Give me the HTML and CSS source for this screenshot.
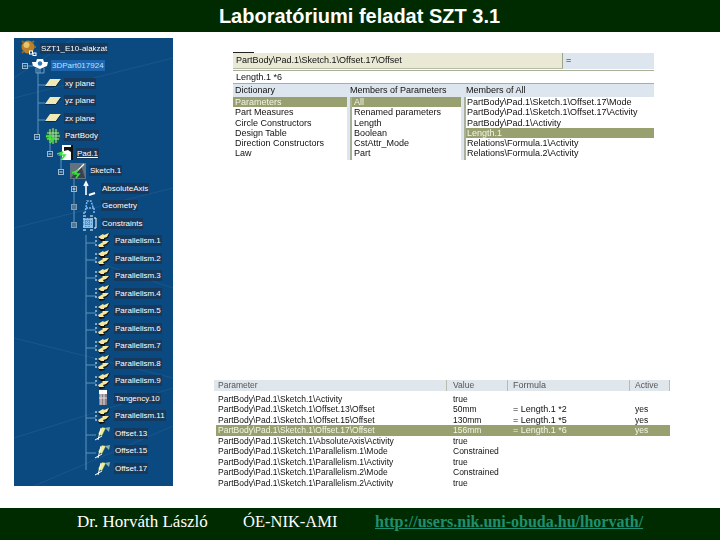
FILE: index.html
```html
<!DOCTYPE html>
<html lang="hu">
<head>
<meta charset="utf-8">
<title>Laboratóriumi feladat SZT 3.1</title>
<link rel="stylesheet" href="styles.css">
</head>
<body>
<svg class="defs" width="0" height="0">
  <symbol id="i-gear" viewBox="0 0 16 16"><circle cx="7" cy="7" r="6.5" fill="#b9822a"/><circle cx="5.5" cy="5" r="3" fill="#e8c46a"/><path d="M1 1l2 2M13 1l-2 2M15 7h-2M1 13l2-2" stroke="#8c6a1e" stroke-width="2"/><rect x="8.5" y="11" width="3" height="3" fill="#0b4a80" stroke="#fff"/><rect x="12" y="13" width="3" height="2.5" fill="#0b4a80" stroke="#fff"/></symbol>
  <symbol id="i-part" viewBox="0 0 16 16"><path d="M0 4l4 0 1-3h6l1 3 4 0-1 4-7 3-7-3z" fill="#fff"/><circle cx="8" cy="5.5" r="2.2" fill="#2f78b4"/><path d="M4 10v5h8v-5M8 11v4" fill="none" stroke="#6f9fc4"/></symbol>
  <symbol id="i-plane" viewBox="0 0 16 16"><path d="M5 4h11l-5 7H0z" fill="#efe9b8"/><path d="M0 11.5h11l5-7" fill="none" stroke="#0a2c4c"/></symbol>
  <symbol id="i-body" viewBox="0 0 16 16"><circle cx="8" cy="8" r="7.5" fill="#17624a"/><path d="M2 5h12M1 8h14M2 11h12M5 1v14M8 0v16M11 1v14" stroke="#b6e89a"/><path d="M1 9l6-2-3 3 5 0-4 5" fill="none" stroke="#3fe03f" stroke-width="1.6"/></symbol>
  <symbol id="i-pad" viewBox="0 0 16 16"><rect x="5" y="0" width="11" height="15" fill="#fff"/><path d="M7 2h7v5l-3-2-4 1z" fill="#111"/><path d="M15 0v15" stroke="#111" stroke-width="2"/><path d="M0 9l6-2-3 3 5 0-4 5" fill="none" stroke="#3fe03f" stroke-width="1.6"/></symbol>
  <symbol id="i-sketch" viewBox="0 0 16 16"><rect x="0" y="0" width="16" height="16" fill="#62727e"/><path d="M1 15L11 2l4 13z" fill="#36434e"/><path d="M6 9l8-8" stroke="#fff" stroke-width="1.2"/><path d="M2 10l5-2-2 3 4 0-3 4" fill="none" stroke="#3fe03f" stroke-width="1.6"/></symbol>
  <symbol id="i-axis" viewBox="0 0 16 16"><path d="M4 15V3M2 6l2-4 2 4" fill="none" stroke="#fff" stroke-width="1.6"/><path d="M7 15l6-2" stroke="#fff" stroke-width="2"/></symbol>
  <symbol id="i-geom" viewBox="0 0 16 16"><path d="M3 15l2-12h4l2 6M4 10h9M12 10v5M1 15h2" fill="none" stroke="#7fb8f0" stroke-dasharray="2 1" stroke-width="1.5"/></symbol>
  <symbol id="i-cons" viewBox="0 0 16 16"><rect x="1" y="3" width="10" height="10" fill="#8fc0e8"/><path d="M1 6h10M1 9h10M4 3v10M7 3v10" stroke="#2a6aa8" stroke-dasharray="1 1"/><path d="M12 3h2v10h-2" fill="none" stroke="#fff"/><path d="M1 1h3M8 1h3M1 15h3M8 15h3" stroke="#fff"/></symbol>
  <symbol id="i-par" viewBox="0 0 16 16"><path d="M3 5l5-3 1 1 6-3-2 5-3 1 0 2H6z" fill="#111"/><path d="M3 4l5-3 1 1 5-2-2 4-3 1v1H6z" fill="#f5e7a0"/><path d="M3 13l5-4-1-1 8 0-3 4-3 1 1 2-5 1z" fill="#111"/><path d="M3 12l5-3-1-1 7 0-3 3-3 1 1 2-5 0z" fill="#f5e7a0"/><path d="M1 3v2M1 7v2M1 11v2" stroke="#fff"/></symbol>
  <symbol id="i-tan" viewBox="0 0 16 16"><rect x="4" y="0" width="8" height="4" fill="#fff"/><rect x="4" y="4" width="8" height="11" fill="#8a7f86"/><path d="M6 4v11M9 4v11M4 8h8" stroke="#e6dfe0"/></symbol>
  <symbol id="i-off" viewBox="0 0 16 16"><path d="M3 9l4-7 4 1-4 8z" fill="#e8ef9a" stroke="#2c4a30" stroke-width=".5"/><path d="M0 15l7-4M3 15l3-12" stroke="#fff"/><path d="M10 3l5-1-1 5z" fill="#8fb4b0"/></symbol>
</svg>

<header class="top-bar">Laboratóriumi feladat SZT 3.1</header>

<main class="slide">
  <section class="tree">
    <svg class="tree-lines" viewBox="0 0 159 448" width="159" height="448">
      <path class="faint" d="M0 60L159 20M0 190L159 150M60 0L0 40M0 300l159 40M0 400l159-50M20 448l139-60M70 220l89 30"/>
      <path class="conn" d="M24 28V99M11 28h8M24 47h8M24 65h7M24 82h7M36 100v16M47 118v16M60 134v53M72 197V432M72 205h10M72 222h10M72 240h10M72 258h10M72 275h10M72 292h10M72 310h10M72 327h10M72 345h10M72 380h10M72 397h10M72 415h10"/>
      <g class="box">
        <rect x="8.5" y="25.5" width="5" height="5"/>
        <rect x="20.5" y="96.5" width="5" height="5"/>
        <rect x="33.5" y="113.5" width="5" height="5"/>
        <rect x="44.5" y="131.5" width="5" height="5"/>
        <rect x="57.5" y="148.5" width="5" height="5"/>
      </g>
      <path class="sign" d="M9.5 28h3M21.5 99h3M34.5 116h3M45.5 134h3M58.5 151h3M60 149.5v3"/>
      <g class="box box-solid">
        <rect x="57.5" y="166.5" width="5" height="5"/>
        <rect x="57.5" y="184.5" width="5" height="5"/>
      </g>
    </svg>
    <ul class="tree-list">
      <li class="node l0"><svg class="ico"><use href="#i-gear"/></svg><span class="lbl">SZT1_E10-alakzat</span></li>
      <li class="node l1"><svg class="ico"><use href="#i-part"/></svg><span class="lbl lbl-active">3DPart017924</span></li>
      <li class="node l2"><svg class="ico"><use href="#i-plane"/></svg><span class="lbl">xy plane</span></li>
      <li class="node l2"><svg class="ico"><use href="#i-plane"/></svg><span class="lbl">yz plane</span></li>
      <li class="node l2"><svg class="ico"><use href="#i-plane"/></svg><span class="lbl">zx plane</span></li>
      <li class="node l2"><svg class="ico"><use href="#i-body"/></svg><span class="lbl">PartBody</span></li>
      <li class="node l3"><svg class="ico"><use href="#i-pad"/></svg><span class="lbl lbl-under">Pad.1</span></li>
      <li class="node l4"><svg class="ico"><use href="#i-sketch"/></svg><span class="lbl">Sketch.1</span></li>
      <li class="node l5"><svg class="ico"><use href="#i-axis"/></svg><span class="lbl">AbsoluteAxis</span></li>
      <li class="node l5"><svg class="ico"><use href="#i-geom"/></svg><span class="lbl">Geometry</span></li>
      <li class="node l5"><svg class="ico"><use href="#i-cons"/></svg><span class="lbl">Constraints</span></li>
      <li class="node l6"><svg class="ico"><use href="#i-par"/></svg><span class="lbl">Parallelism.1</span></li>
      <li class="node l6"><svg class="ico"><use href="#i-par"/></svg><span class="lbl">Parallelism.2</span></li>
      <li class="node l6"><svg class="ico"><use href="#i-par"/></svg><span class="lbl">Parallelism.3</span></li>
      <li class="node l6"><svg class="ico"><use href="#i-par"/></svg><span class="lbl">Parallelism.4</span></li>
      <li class="node l6"><svg class="ico"><use href="#i-par"/></svg><span class="lbl">Parallelism.5</span></li>
      <li class="node l6"><svg class="ico"><use href="#i-par"/></svg><span class="lbl">Parallelism.6</span></li>
      <li class="node l6"><svg class="ico"><use href="#i-par"/></svg><span class="lbl">Parallelism.7</span></li>
      <li class="node l6"><svg class="ico"><use href="#i-par"/></svg><span class="lbl">Parallelism.8</span></li>
      <li class="node l6"><svg class="ico"><use href="#i-par"/></svg><span class="lbl">Parallelism.9</span></li>
      <li class="node l6"><svg class="ico"><use href="#i-tan"/></svg><span class="lbl">Tangency.10</span></li>
      <li class="node l6"><svg class="ico"><use href="#i-par"/></svg><span class="lbl">Parallelism.11</span></li>
      <li class="node l6"><svg class="ico"><use href="#i-off"/></svg><span class="lbl">Offset.13</span></li>
      <li class="node l6"><svg class="ico"><use href="#i-off"/></svg><span class="lbl">Offset.15</span></li>
      <li class="node l6"><svg class="ico"><use href="#i-off"/></svg><span class="lbl">Offset.17</span></li>
    </ul>
  </section>

  <div class="right">
    <section class="editor">
      <div class="path-row">
        <div class="path">PartBody\Pad.1\Sketch.1\Offset.17\Offset</div>
        <div class="eq">=</div>
      </div>
      <div class="formula">Length.1 *6</div>
      <div class="columns">
        <div class="col col-dict">
          <div class="col-head">Dictionary</div>
          <ul class="list">
            <li class="sel">Parameters</li><li>Part Measures</li><li>Circle Constructors</li><li>Design Table</li><li>Direction Constructors</li><li>Law</li>
          </ul>
        </div>
        <div class="col col-mem">
          <div class="col-head">Members of Parameters</div>
          <ul class="list">
            <li class="sel">All</li><li>Renamed parameters</li><li>Length</li><li>Boolean</li><li>CstAttr_Mode</li><li>Part</li>
          </ul>
        </div>
        <div class="col col-all">
          <div class="col-head">Members of All</div>
          <ul class="list">
            <li>PartBody\Pad.1\Sketch.1\Offset.17\Mode</li><li>PartBody\Pad.1\Sketch.1\Offset.17\Activity</li><li>PartBody\Pad.1\Activity</li><li class="sel">Length.1</li><li>Relations\Formula.1\Activity</li><li>Relations\Formula.2\Activity</li>
          </ul>
        </div>
      </div>
    </section>

    <section class="params">
      <div class="p-row p-head"><span>Parameter</span><span>Value</span><span>Formula</span><span>Active</span></div>
      <div class="p-row"><span>PartBody\Pad.1\Sketch.1\Activity</span><span>true</span><span></span><span></span></div>
      <div class="p-row"><span>PartBody\Pad.1\Sketch.1\Offset.13\Offset</span><span>50mm</span><span>= Length.1 *2</span><span>yes</span></div>
      <div class="p-row"><span>PartBody\Pad.1\Sketch.1\Offset.15\Offset</span><span>130mm</span><span>= Length.1 *5</span><span>yes</span></div>
      <div class="p-row sel"><span>PartBody\Pad.1\Sketch.1\Offset.17\Offset</span><span>156mm</span><span>= Length.1 *6</span><span>yes</span></div>
      <div class="p-row"><span>PartBody\Pad.1\Sketch.1\AbsoluteAxis\Activity</span><span>true</span><span></span><span></span></div>
      <div class="p-row"><span>PartBody\Pad.1\Sketch.1\Parallelism.1\Mode</span><span>Constrained</span><span></span><span></span></div>
      <div class="p-row"><span>PartBody\Pad.1\Sketch.1\Parallelism.1\Activity</span><span>true</span><span></span><span></span></div>
      <div class="p-row"><span>PartBody\Pad.1\Sketch.1\Parallelism.2\Mode</span><span>Constrained</span><span></span><span></span></div>
      <div class="p-row"><span>PartBody\Pad.1\Sketch.1\Parallelism.2\Activity</span><span>true</span><span></span><span></span></div>
    </section>
  </div>
</main>

<footer class="bottom-bar">
  <span class="author">Dr. Horváth László</span>
  <span class="org">ÓE-NIK-AMI</span>
  <a class="url" href="#">http://users.nik.uni-obuda.hu/lhorvath/</a>
</footer>
</body>
</html>
```

FILE: styles.css
```css
* { box-sizing: border-box; }
html, body { margin: 0; padding: 0; }
body {
  width: 720px;
  height: 540px;
  display: flex;
  flex-direction: column;
  background: #fff;
  overflow: hidden;
  font-family: "Liberation Sans", Arial, sans-serif;
}
ul { list-style: none; margin: 0; padding: 0; }
.defs { position: absolute; }

.top-bar {
  height: 32px;
  flex: none;
  background: #002b00;
  color: #fff;
  font-weight: bold;
  font-size: 20px;
  line-height: 32px;
  text-align: center;
  padding-right: 1px;
}

.slide {
  flex: 1;
  display: flex;
  min-height: 0;
}

.tree {
  position: relative;
  flex: none;
  width: 159px;
  height: 448px;
  margin: 6px 0 0 14px;
  background: #0b4a80;
  overflow: hidden;
}
.tree-lines { position: absolute; left: 0; top: 0; }
.faint { stroke: #2a6294; stroke-width: 1; fill: none; opacity: .5; }
.conn { stroke: #5f93bb; stroke-width: 1; fill: none; }
.box rect { fill: #0b4a80; stroke: #9db8cf; stroke-width: 1; }
.box-solid rect { fill: #4f7696; stroke: #7f9cb4; }
.sign { stroke: #d5e2ec; stroke-width: 1; fill: none; }

.tree-list {
  position: relative;
  padding-top: 1.5px;
  filter: blur(.4px);
}
.node {
  height: 17.5px;
  display: flex;
  align-items: center;
  font-size: 8px;
  color: #fff;
}
.ico { width: 16px; height: 16px; flex: none; margin-right: 3px; }
.lbl {
  background: #17395c;
  padding: 0 1px;
  line-height: 11px;
  white-space: nowrap;
}
.lbl-active { background: #1d66ad; color: #b8e0ff; }
.lbl-under { text-decoration: underline; }
.l0 { padding-left: 7px; }
.l1 { padding-left: 18px; }
.l2 { padding-left: 31px; }
.l3 { padding-left: 43px; }
.l4 { padding-left: 56px; }
.l5 { padding-left: 68px; }
.l6 { padding-left: 81px; }

.right {
  flex: 1;
  display: flex;
  flex-direction: column;
  min-width: 0;
  padding: 20px 0 21px;
}

.editor {
  position: relative;
  width: 421px;
  height: 108px;
  margin-left: 60px;
  font-size: 9px;
  line-height: 10.3px;
  color: #111;
  background: #fff;
  display: flex;
  flex-direction: column;
  filter: blur(.4px);
  overflow: hidden;
  border-top: 1px solid #222;
  border-image: linear-gradient(to right, #222 22px, #fff 22px) 1;
}
.path-row {
  height: 16px;
  flex: none;
  display: flex;
  background: #dde6ee;
}
.path {
  width: 330px;
  background: #e9e9d6;
  border-right: 1px solid #9aa58a;
  border-bottom: 1px solid #b6bca4;
  line-height: 15px;
  padding-left: 3px;
}
.eq { padding-left: 3px; line-height: 14px; }
.formula {
  height: 14px;
  flex: none;
  margin-top: 1px;
  border-top: 1px solid #a8b09a;
  border-bottom: 1px solid #a8b09a;
  line-height: 12px;
  padding-left: 3px;
}
.columns {
  flex: 1;
  display: grid;
  grid-template-columns: 117px 114px 190px;
  background: #dde6ee;
}
.col { display: flex; flex-direction: column; min-width: 0; }
.col-head { height: 13px; flex: none; line-height: 12px; padding-left: 2px; }
.list {
  flex: 1;
  background: #fff;
  border-left: 2px solid #a8b09a;
  margin-right: 3px;
}
.col-all .list { margin-right: 0; }
.col-mem .col-head { padding-left: 0; }
.col-dict .list { border-left-width: 0; }
.list li { height: 10.3px; padding-left: 2px; white-space: nowrap; }
.col-all .list li { padding-left: 1px; }
.list .sel { background: #98a070; color: #f4f4e4; }

.params {
  width: 456px;
  height: 107px;
  margin: auto 0 0 41px;
  font-size: 8.5px;
  color: #111;
  overflow: hidden;
  filter: blur(.4px);
}
.p-row {
  display: grid;
  grid-template-columns: 233px 61px 122px 40px;
  height: 10.5px;
  line-height: 10.5px;
  white-space: nowrap;
}
.p-row span { padding-left: 4px; overflow: hidden; }
.p-row span:nth-child(2) { padding-left: 6px; }
.p-row span:nth-child(3) { padding-left: 5px; font-size: 9px; }
.p-row span:nth-child(4) { padding-left: 5px; }
.p-head {
  height: 13.5px;
  line-height: 11px;
  color: #555;
}
.p-head span {
  height: 11px;
  background: #dfe6ec;
  border-right: 1px solid #b8bcb0;
}
.p-row.sel { background: #98a070; color: #f4f4e4; margin-left: 2px; grid-template-columns: 231px 61px 122px 40px; }
.p-row.sel span:first-child { padding-left: 2px; }

.bottom-bar {
  height: 32px;
  flex: none;
  background: #002b00;
  color: #fff;
  font-family: "Liberation Serif", "Times New Roman", serif;
  font-size: 17px;
  line-height: 27px;
  display: flex;
  padding-left: 77px;
}
.author { width: 166px; }
.org { width: 132px; font-size: 16.5px; }
.url { color: #1f8f70; font-weight: bold; font-size: 16px; text-decoration: underline; }
```
